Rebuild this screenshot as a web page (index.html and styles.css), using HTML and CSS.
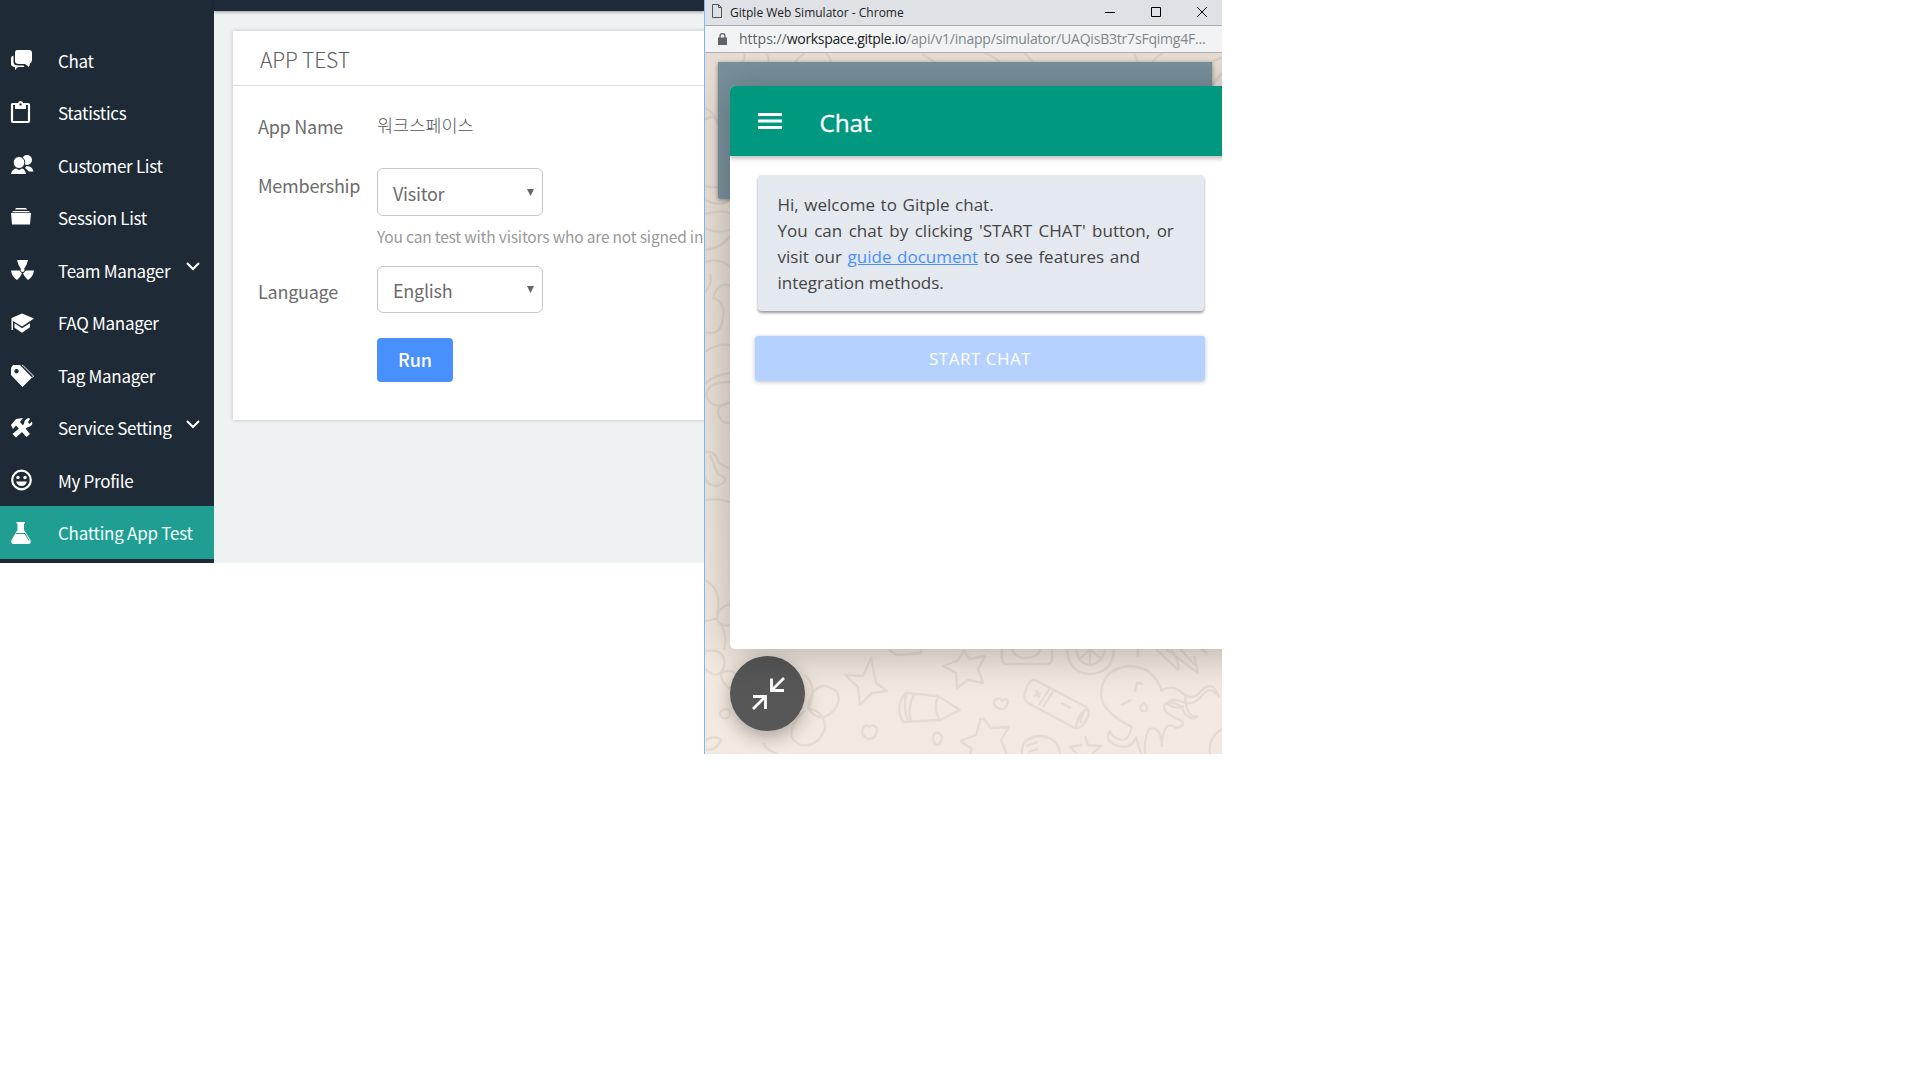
FILE: index.html
```html
<!DOCTYPE html>
<html lang="en">
<head>
<meta charset="utf-8">
<title>App Test</title>
<link rel="stylesheet" href="styles.css">
</head>
<body>
<div class="desktop">
  <div class="app">
    <nav class="sidebar">
      <a class="item"><svg class="ico" viewBox="0 0 24 24"><path d="M7 2h12q3 0 3 3v7q0 3-2 3.500l-1 3.500-4-3H9q-4 0-4-3V5q0-3 2-3z"/><path d="M3.500 7.500V14q0 3.500 5 3.500h5l1 1.500H8l-3 3v-3Q1 18.500 1 16v-6q0-2 2.500-2.500z"/></svg><span>Chat</span></a>
      <a class="item"><svg class="ico" viewBox="0 0 24 24"><path class="line" d="M6 4H2.500Q2 4 2 4.500V21q0 1 1 1h15q1 0 1-1V5q0-1-1-1h-3"/><path fill-rule="evenodd" d="M5 3h3q.5-2 2.500-2T13 3h3v6H5zM9.500 3.500h2v2h-2z"/></svg><span>Statistics</span></a>
      <a class="item"><svg class="ico" viewBox="0 0 24 24"><ellipse cx="17" cy="7" rx="5" ry="5"/><path d="M15 15l1.500-2 3 .5q3 1 4 5H19z"/><ellipse class="cut" cx="9" cy="9.500" rx="5.800" ry="6"/><path d="M1 21q1-5 5-5.500l3 1.500 3-1.500q3 .5 4 5.500z"/></svg><span>Customer List</span></a>
      <a class="item"><svg class="ico" viewBox="0 0 24 24"><path d="M6 3h10l1 1.500H5zM3 6h16l1 1.200H2zM1 8h20l-1 11.500H2z"/></svg><span>Session List</span></a>
      <a class="item"><svg class="ico" viewBox="0 0 24 24"><path d="M7 2h11q-1 5-4 9h-3Q8 7 7 2zM1 12.500h8.500l2.500 3Q10 20 7 22q-5-3-6-9.500zM24 12.500h-8l-3 3Q15 20 18 22q5-3 6-9.500z"/><circle cx="12.500" cy="12" r="2"/></svg><span>Team Manager</span><svg class="chev" viewBox="0 0 14 8"><path d="M1 1l6 6 6-6"/></svg></a>
      <a class="item"><svg class="ico" viewBox="0 0 24 24"><path d="M12 2.500L24 7.500l-12 8L3 10v9H1.500V7z"/><path d="M4.500 12.200l7.500 5 8-5v4l-8 5.500-7.500-5z"/></svg><span>FAQ Manager</span></a>
      <a class="item"><svg class="ico" viewBox="0 0 24 24"><path fill-rule="evenodd" d="M3 2h7l12 12.500L12.500 24 1 12V5zM6.500 6a2.200 2.200 0 1 0 .1 0z"/><path class="thin" d="M12 2.500h1L23.500 13l-1 1.500"/></svg><span>Tag Manager</span></a>
      <a class="item"><svg class="ico" viewBox="0 0 24 24"><path d="M1 9l5-6 7-1-3 4 10 12-3.500 3L6 9.500 3 13z"/><path d="M2.500 18L14 8q0-5 5-6l1 1-2 3 1.500 2L22 5.500q1.500 4.500-5 6L6 21.500z"/></svg><span>Service Setting</span><svg class="chev" viewBox="0 0 14 8"><path d="M1 1l6 6 6-6"/></svg></a>
      <a class="item"><svg class="ico" viewBox="0 0 24 24"><circle class="line" cx="11.500" cy="12" r="9.300"/><circle cx="8" cy="9.500" r="1.700"/><circle cx="15" cy="9.500" r="1.700"/><path d="M6 13.500h11q-1.500 4.500-5.500 4.500T6 13.500z"/></svg><span>My Profile</span></a>
      <a class="item active"><svg class="ico" viewBox="0 0 24 24"><path d="M6.500 1h8.500v1.500h-1V9l6.500 10q1 4-2 4h-15q-3 0-2-4L7.500 9V2.500h-1z"/><path class="teal" d="M6 12.500h9l4 7"/></svg><span>Chatting App Test</span></a>
    </nav>
    <div class="main">
      <div class="topbar"></div>
      <section class="card">
        <h1 class="card-title">APP TEST</h1>
        <div class="row r1"><div class="label">App Name</div><div class="kr">워크스페이스</div></div>
        <div class="row r2"><div class="label">Membership</div><div><div class="select s1"><span>Visitor</span><svg class="arrow" viewBox="0 0 7 7"><path d="M0 0h7L3.500 7z"/></svg></div><div class="hint">You can test with visitors who are not signed in</div></div></div>
        <div class="row r3"><div class="label">Language</div><div class="select s2"><span>English</span><svg class="arrow" viewBox="0 0 7 7"><path d="M0 0h7L3.500 7z"/></svg></div></div>
        <div class="row r4"><div></div><button class="run">Run</button></div>
      </section>
    </div>
  </div>
  <div class="window">
    <div class="titlebar">
      <svg class="file" viewBox="0 0 10 14"><path d="M.5.5h6l3 3v10h-9zM6.500.5v3h3"/></svg>
      <span class="win-title">Gitple Web Simulator - Chrome</span>
      <svg class="controls" viewBox="0 0 102 10"><path d="M0 5.500h10M46.500.5h9v9h-9zM92 0l10 10M102 0L92 10"/></svg>
    </div>
    <div class="address">
      <svg class="lock" viewBox="0 0 9 12"><path d="M0 4.500h9V12H0z"/><path class="shackle" d="M2 5V3q0-2.300 2.500-2.300T7 3v2"/></svg>
      <span class="url"><span class="scheme">https://</span><span class="host">workspace.gitple.io</span><span class="path">/api/v1/inapp/simulator/UAQisB3tr7sFqimg4F...</span></span>
    </div>
    <div class="page">
      <svg class="doodles" viewBox="705 53 517 701">
        <path d="M1035 680l51 27q6 6-1 15-5 8-12 5l-45-24q-6-4-2-14t9-9zM1054 690l-11 17M1050 688l-11 17M1088 709q-9 2-12 18M1084 712q-4 6-3 11M1036 690l3 8m-5-2l7-3M1061 703l10 5"/>
        <path d="M1132 727q-30-15-31-32 0-25 27-29 26 0 34 26M1162 690q12-6 20 3 10 8 17 0 14-16 20 5M1216 694q-7-9-16 4-10 9-20 3-12-3-12 3 8 6 16 2M1132 727q-4 14-10 13-10-2-12-9-6 8 5 14 16 6 21-8l5 17M1145 754q-1-16 4-25 12-4 13 18M1162 741q3-22 14-13 12-3 4-8-20-8-15-16 14-5 20 10 9 8 12 2-10 3-12-19M1121 705l10-5M1135 692l2-9 6 1M1144 703q5 4 2 8-6 1-6-4z"/>
        <path d="M964 651l6 8 15-3-7 13 5 14-15-3-11 8-1-15-13-7 14-5zM983 718l8 10 18-1-8 13 6 15M960 741l16-6 5-17M960 741l12 8-3 7M1085 736l3 9 13 1-9 8M1082 745l-12 2 7 7M995 700q5-4 7 1 5-4 6 1-2 8-8 7-9-4-5-9z"/>
        <path d="M1002 649v10q0 5 5 5h40q5 0 5-5v-10M1012 649q3 9 14 9t15-9M1067 649q1 24 23 25 23-1 24-25M1076 649q2 15 14 16 13-2 15-16M1090 649v16M1090 649l-11 11M1090 649l12 11M1156 649l22 21q2-8-7-21M1166 649l32 24-4-17M1180 649l15 16M1138 649v8M1201 649l6 4"/>
        <path d="M1022 754q-1-17 18-18 18 1 20 18M1026 746l12-4M1028 752l10-3M1210 754q-2-17 12-25"/>
        <path d="M871 658l5 25 11 8-15 2-12 12-2-18-13-12 18 1zM906 693l32 3 22 14-20 10-37 2q-9-16 3-29zM914 694q-7 14-3 28M938 697q-5 11 1 22M906 694q-3 14 2 27"/>
        <path d="M808 708q3-22 17-22 21 5 10 23-15 17-27-1 17 4 17 20-7 20-24 17-21-9 3-34M810 706q7-20-5-31M863 728q4-5 6-1 5-4 8 2 0 10-9 10-8-4-5-11zM934 734q5-4 8 3-2 11-8 6-2-4 0-9zM889 650l8 5 24-2v-4"/>
        <path d="M705 651q22-3 19 16-5 14-19 2M721 673q12-6 17 5l-8 11q-10-8-9-16zM721 711q5-4 9 0 1 9-7 7-5-3-2-7zM705 740q12-5 16 0-5 12-16 9M763 743q4 8 15 11"/>
        <path d="M730 382q-26 0-23 16 6 12 23 5M730 402q-18 4-9 18 4 4 9 3M705 452q10-2 14 11 8 4 11 6M705 465q-4 20 12 21 16-6 1-12l-8-19M705 500q15-2 25 2M705 580q18 10 12 34M730 604q-15 4-12 18 6 5 12 3M717 618q-6 3-12 3M717 620q12 12 7 30M705 352q12-9 25-7M705 384q8-9 25-11M705 332q15 4 17-10 5-20-9-24 6-18 17-12M705 292q8-9 5-18M705 262q15-5 25 5M705 250q17-2 25-14M705 228q10 6 25 2M705 120q10-8 13 5M705 108q12 6 13 18M705 186q8 2 13 1M705 200q18 8 25-1M705 214q20-5 25 0"/>
        <path d="M742 63q4-6 2-10M765 53q5 3 3 10M805 53q-8 5-10 10M826 53q5 5 5 10M922 54q12 8 15 9M984 53q12 4 16 10M1024 53q5 4 10 10M1134 53l4 10M1152 63q4-7 12-10M1212 85l10-12M1212 62l10-5"/>
      </svg>
      <div class="backdrop"></div>
      <div class="fab"><svg viewBox="0 0 33 33"><path d="M32 1L20 13M19.500 1.500v12H32M1 32l12-12M1 19.500h12.500V32"/></svg></div>
      <div class="panel">
        <div class="panel-head"><svg class="burger" viewBox="0 0 24 16"><path d="M0 1.500h24M0 8h24M0 14.500h24"/></svg><span>Chat</span></div>
        <div class="panel-body">
          <div class="message"><div class="l1">Hi, welcome to Gitple chat.</div><div class="l2">You can chat by clicking 'START CHAT' button, or</div><div class="l3">visit our <a class="link">guide document</a> to see features and</div><div class="l4">integration methods.</div></div>
          <button class="start">START CHAT</button>
        </div>
      </div>
    </div>
  </div>
</div>
</body>
</html>
```
FILE: styles.css
```css
* { box-sizing: border-box; }
body { margin: 0; background: #fff; font-family: "Noto Sans CJK KR", "Noto Sans", sans-serif; overflow: hidden; }
.desktop { display: flex; align-items: flex-start; width: 1222px; }
.app { display: flex; width: 704px; height: 563px; flex: none; background: #eef2f3; overflow: hidden; }

.sidebar { width: 214px; flex: none; background: #1e2b37; padding-top: 33.5px; }
.item { display: flex; align-items: center; height: 52.55px; padding-left: 10px; color: #fff; font-size: 17px; line-height: 24px; letter-spacing: -.3px; white-space: nowrap; }
.item span { width: 128px; margin-left: 24px; padding-top: 1.5px; }
.item.active { background: #219e92; letter-spacing: -.25px; }
.item.active span { color: #f2fffd; }
.ico { width: 24px; height: 24px; fill: #fff; flex: none; }
.ico .line { fill: none; stroke: #fff; stroke-width: 2.2; }
.ico .thin { fill: none; stroke: #fff; stroke-width: 1; }
.ico .cut { stroke: #1e2b37; stroke-width: 1; }
.ico .teal { fill: none; stroke: #219e92; stroke-width: 1; }
.chev { width: 14px; height: 8px; margin-top: -7px; fill: none; stroke: #fff; stroke-width: 2; overflow: visible; }

.main { flex: 1; min-width: 0; }
.topbar { height: 11px; background: #1e2b37; box-shadow: 0 1px 3px rgba(0,0,0,.4); }
.card { margin: 20px 0 0 19px; height: 389px; width: 520px; background: #fff; box-shadow: 0 0 4px rgba(0,0,0,.22); color: #6c6c6c; }
.card-title { margin: 0; height: 55px; padding-left: 27px; border-bottom: 1px solid #ddd; font-size: 21px; font-weight: 300; letter-spacing: -.15px; line-height: 56px; color: #606060; }
.row { display: grid; grid-template-columns: 119px 1fr; padding-left: 25px; font-size: 18px; line-height: 28px; letter-spacing: -.25px; white-space: nowrap; }
.r1 { height: 68px; padding-top: 26px; }
.kr { font-size: 17.5px; line-height: 25px; letter-spacing: 0; font-weight: 300; color: #555; }
.r2 { height: 98px; padding-top: 14px; }
.r2 .label { padding-top: 3px; }
.r3 { height: 72px; padding-top: 14px; }
.r3 .label { padding-top: 11px; }
.r4 { padding-top: 14px; }
.select { display: flex; justify-content: space-between; width: 166px; border: 1px solid #c8c8c8; border-radius: 6px; padding: 0 8px 0 15px; }
.s1 { height: 48px; padding-top: 10px; }
.s2 { height: 47px; padding-top: 9px; }
.s2 span { height: 26px; overflow: hidden; }
.arrow { width: 7px; height: 7px; margin-top: 10px; fill: #666; }
.hint { margin-top: 7px; font-size: 15.5px; line-height: 26px; letter-spacing: -.18px; color: #999; }
.run { width: 76px; height: 44px; border: 0; border-radius: 4px; padding: 0 0 2px; background: #4990ff; color: #fff; font: 500 18px/40px "Noto Sans CJK KR", sans-serif; }

.window { width: 518px; height: 754px; flex: none; border-left: 1px solid #7ab8f8; font-family: "Open Sans", sans-serif; }
.titlebar { display: flex; align-items: center; height: 26px; padding: 0 15px 1px 7px; background: #dee1e6; border-bottom: 1px solid #a8abaf; font-size: 12px; color: #222; white-space: nowrap; }
.file { width: 10px; height: 14px; fill: none; stroke: #555; stroke-width: 1; margin-top: -3px; }
.win-title { margin-left: 8px; flex: 1; }
.controls { width: 102px; height: 10px; fill: none; stroke: #000; stroke-width: 1; }
.address { display: flex; align-items: center; height: 27px; padding-left: 13px; background: #f1f3f4; border-bottom: 1px solid #b0b0b0; font-size: 14px; white-space: nowrap; }
.lock { width: 9px; height: 12px; fill: #5f6368; }
.shackle { fill: none; stroke: #5f6368; stroke-width: 1.3; }
.url { margin: -1px 0 0 12px; color: #80868b; }
.scheme { color: #5f6368; }
.host { color: #202124; letter-spacing: -.32px; }
.path { letter-spacing: -.2px; }
.page { position: relative; height: 701px; overflow: hidden; background: linear-gradient(#e6dcd3, #eae0d7 50%, #f3e9e0 85%); }
.doodles { display: block; width: 517px; height: 701px; fill: none; stroke: rgba(125,105,90,.11); stroke-width: 2.3; stroke-linejoin: round; }
.backdrop { position: absolute; left: 13px; top: 9px; width: 494px; height: 137px; background: #78909c; border-radius: 0 0 3px 3px; box-shadow: 0 1px 4px rgba(0,0,0,.4); }
.fab { position: absolute; left: 25px; top: 603px; width: 75px; height: 75px; border-radius: 50%; background: #575757; box-shadow: 0 6px 18px rgba(0,0,0,.3); display: flex; align-items: center; justify-content: center; }
.fab svg { width: 33px; height: 33px; margin: 0 0 0 1px; fill: none; stroke: #fff; stroke-width: 2.8; }
.panel { position: absolute; left: 25px; top: 33px; width: 530px; height: 563px; border-radius: 5px; background: #fff; box-shadow: 0 5px 40px rgba(0,0,0,.25); overflow: hidden; }
.panel-head { display: flex; align-items: center; height: 70px; padding: 2px 0 0 28px; background: #00987f; box-shadow: 0 2px 5px rgba(0,0,0,.3); color: #fff; font-size: 24.5px; }
.burger { width: 24px; height: 16px; fill: none; stroke: #fff; stroke-width: 3; margin-top: -3px; }
.panel-head span { margin-left: 37.5px; letter-spacing: -.2px; -webkit-text-stroke: .3px #fff; }
.panel-body { padding: 19px 0 0 25px; }
.message { width: 446px; height: 136px; margin-left: 2.5px; padding: 17px 0 0 20px; border-radius: 4px; background: #e4e8ef; box-shadow: 0 2px 3px rgba(0,0,0,.4); color: #444; font-size: 17px; line-height: 26px; white-space: nowrap; }
.l1 { word-spacing: 1.2px; }
.l2 { word-spacing: 2.1px; }
.l3 { word-spacing: 1.2px; }
.link { color: #4990ff; text-decoration: underline; }
.start { display: block; width: 450px; height: 45px; margin-top: 25px; padding: 1px 0 0; border: 0; border-radius: 3px; background: #b4d1ff; box-shadow: 0 1px 4px rgba(0,0,0,.25); color: #fff; font: 17px/44px "Open Sans", sans-serif; letter-spacing: .5px; }
```
